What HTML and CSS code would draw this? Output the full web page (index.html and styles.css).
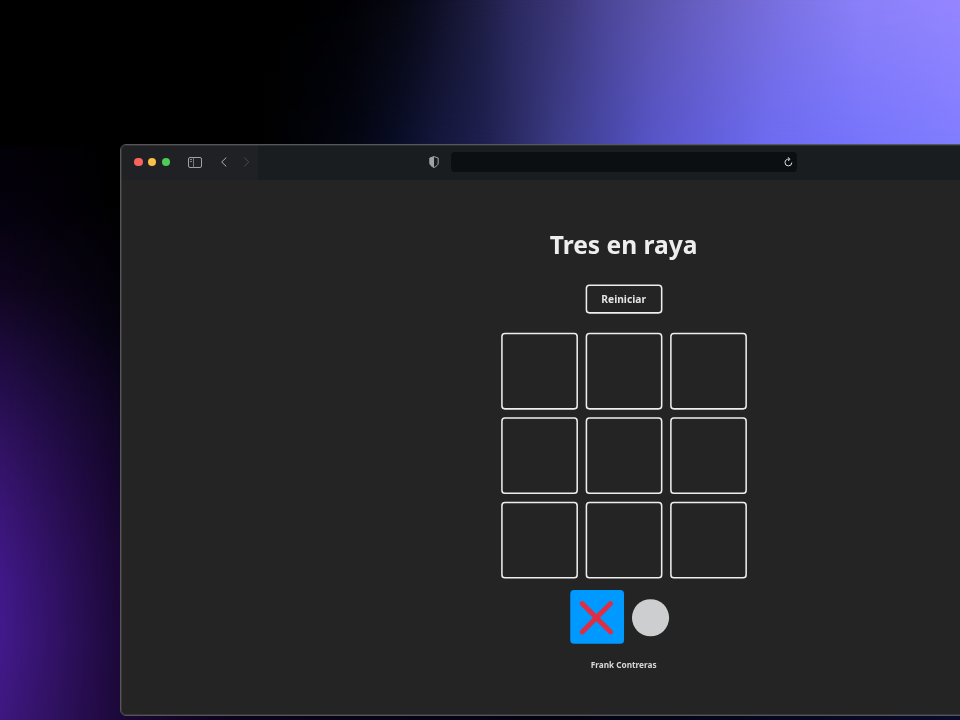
FILE: index.html
```html
<!DOCTYPE html>
<html lang="es">
<head>
<meta charset="utf-8">
<title>Tres en raya</title>
<link rel="stylesheet" href="styles.css">
</head>
<body>
<div class="desktop">
  <div class="glow-left"></div>
  <div class="window">
    <header class="toolbar">
      <div class="controls">
        <span class="dot red"></span><span class="dot yellow"></span><span class="dot green"></span>
        <svg class="sidebar" width="14" height="11" viewBox="0 0 14 11" fill="none" stroke="#a2a3a5"><rect x=".5" y=".5" width="13" height="10" rx="1.5"/><path d="M5.5 .5v10" stroke="#77787b"/><path d="M2 2.5h2M2 4.5h2" stroke="#85868a"/></svg>
        <svg class="back" width="7" height="10" viewBox="0 0 7 10" fill="none" stroke="#b0b1b4"><path d="M6.300 .5 1.700 5l4.600 4.500"/></svg>
        <svg class="forward" width="7" height="10" viewBox="0 0 7 10" fill="none" stroke="#4c4d51"><path d="M1.200 .5 5.800 5 1.200 9.500"/></svg>
      </div>
      <svg class="shield" width="10" height="12" viewBox="0 0 10 12"><path d="M5 .6 9.200 2v5c0 2-1.800 3.400-4.200 4.500C2.600 10.400.8 9 .8 7V2z" fill="none" stroke="#a0a3a5"/><path d="M5 .6v10.900C2.600 10.400.8 9 .8 7V2z" fill="#a0a3a5"/></svg>
      <div class="address">
        <svg width="9" height="10" viewBox="0 0 9 10" fill="none" stroke="#dde0e1"><path d="M5 2.200C2.800 1.800 1 3.300 1 5.500a3.400 3.400 0 0 0 6.800 0M3.800.3 6 2.200 4.200 4"/></svg>
      </div>
    </header>
    <div class="viewport">
      <main class="board">
        <h1>Tres en raya</h1>
        <button>Reiniciar</button>
        <section class="game">
          <div class="square"></div><div class="square"></div><div class="square"></div>
          <div class="square"></div><div class="square"></div><div class="square"></div>
          <div class="square"></div><div class="square"></div><div class="square"></div>
        </section>
        <section class="turn">
          <div class="player selected"><svg width="70" height="70" viewBox="0 0 70 70"><path d="M15.500 17.500 52.500 54.500M52.500 17.500 15.500 54.500" stroke="#dd2e44" stroke-width="6.500" stroke-linecap="round"/></svg></div>
          <div class="player"><svg width="70" height="70" viewBox="0 0 70 70"><circle cx="34.500" cy="36" r="24.200" fill="#cdced0"/></svg></div>
        </section>
        <footer>Frank Contreras</footer>
      </main>
    </div>
  </div>
</div>
</body>
</html>
```
FILE: styles.css
```css
* { box-sizing: border-box; }
body { margin: 0; overflow: hidden; background: #000; }
.desktop {
  position: relative;
  width: 960px;
  height: 720px;
  overflow: hidden;
  padding: 144px 0 0 120px;
  background: linear-gradient(90deg, #1a0835 120px, #0a031c 240px, #020212 560px, #080b2c 960px) 0 712px / 960px 8px no-repeat #000;
}
/* upper glow: two horizontal ramps, cross-faded from top to bottom */
.desktop::before, .desktop::after {
  content: "";
  position: absolute;
  left: 0;
  top: 0;
  width: 960px;
  height: 146px;
}
.desktop::before {
  background: linear-gradient(90deg, #000 290px, #020206 350px, #06070f 395px, #0b0c1e 424px, #1e1e45 483px, #2b2960 515px, #3b3677 561px, #4d4798 607px, #5b54ac 653px, #685fc2 699px, #7269d3 745px, #7c73e5 791px, #8b80f8 860px, #9586ff 960px);
}
.desktop::after {
  background: linear-gradient(90deg, #000 260px, #02030a 315px, #040612 355px, #0a0e28 401px, #14163a 433px, #1e1f4e 483px, #2b2b64 515px, #3c3c8a 561px, #4848a8 607px, #5755c8 653px, #605dd8 699px, #6d6bf0 768px, #7472fa 837px, #807dff 960px);
  -webkit-mask-image: linear-gradient(transparent, #000);
  mask-image: linear-gradient(transparent, #000);
}
/* left glow: two vertical ramps, cross-faded from left to right */
.glow-left, .glow-left::after {
  position: absolute;
  left: 0;
  top: 0;
  width: 126px;
  height: 576px;
}
.glow-left {
  top: 144px;
  background: linear-gradient(#030108, #06020f 70px, #100620 144px, #200c42 218px, #2f1260 292px, #3b1678 366px, #41198a 440px, #431a8b 496px, #3f1880 576px);
}
.glow-left::after {
  content: "";
  background: linear-gradient(#000 60px, #05030d 181px, #0d051d 255px, #130528 329px, #18072f 403px, #1a0835 496px, #1a0835 576px);
  -webkit-mask-image: linear-gradient(90deg, transparent, #000);
  mask-image: linear-gradient(90deg, transparent, #000);
}
.window {
  position: relative;
  z-index: 1;
  width: 1008px;
  height: 572px;
  border: 1px solid #565658;
  border-radius: 6px;
  overflow: hidden;
  background: #242424;
}
.window::after {
  content: "";
  position: absolute;
  inset: 0;
  border-radius: 5px;
  box-shadow: inset 0 0 0 1px rgba(110, 110, 112, .25);
  pointer-events: none;
}
.toolbar {
  display: flex;
  align-items: center;
  height: 35px;
  padding-bottom: 1px;
  background: linear-gradient(90deg, #202125 137px, #191d20 137px);
}
.controls {
  display: flex;
  align-items: center;
  width: 137px;
  height: 33px;
  padding-left: 13px;
}
.dot { width: 8.500px; height: 8.500px; margin-right: 5.300px; border-radius: 50%; }
.red { background: #f7645c; }
.yellow { background: #f8c04a; }
.green { background: #4fcb58; }
.sidebar { margin-left: 12.600px; }
.back { margin-left: 18px; }
.forward { margin-left: 16px; }
.shield { margin-left: 170.500px; margin-top: -1px; }
.address {
  display: flex;
  align-items: center;
  justify-content: flex-end;
  width: 346px;
  height: 20px;
  margin-left: 12.500px;
  padding-right: 4px;
  border-radius: 4px;
  background: #0b0f11;
}
.viewport { height: 535px; }
.board {
  display: flex;
  flex-direction: column;
  align-items: center;
  width: 1309px;
  height: 696px;
  padding-top: 62px;
  transform: scale(.768);
  transform-origin: 0 0;
  color: #eee;
  font-family: "Noto Sans", sans-serif;
}
h1 { margin: 0; font-size: 32px; line-height: 44px; }
button {
  width: 100px;
  height: 38px;
  margin-top: 30px;
  padding: 0;
  border: 2px solid #eee;
  border-radius: 5px;
  background: transparent;
  color: #e4e4e4;
  font: bold 13.333px "Noto Sans", sans-serif;
}
.game {
  display: grid;
  grid-template-columns: repeat(3, 100px);
  grid-auto-rows: 100px;
  gap: 10px;
  margin-top: 25px;
}
.square { border: 2px solid #eee; border-radius: 5px; }
.turn { display: flex; margin-top: 15px; }
.player { width: 70px; height: 70px; border-radius: 5px; }
.player svg { display: block; }
.selected { background: #09f; }
footer { margin-top: 19px; color: #d8d8d8; font-size: 10.720px; font-weight: bold; line-height: 16px; }
```
